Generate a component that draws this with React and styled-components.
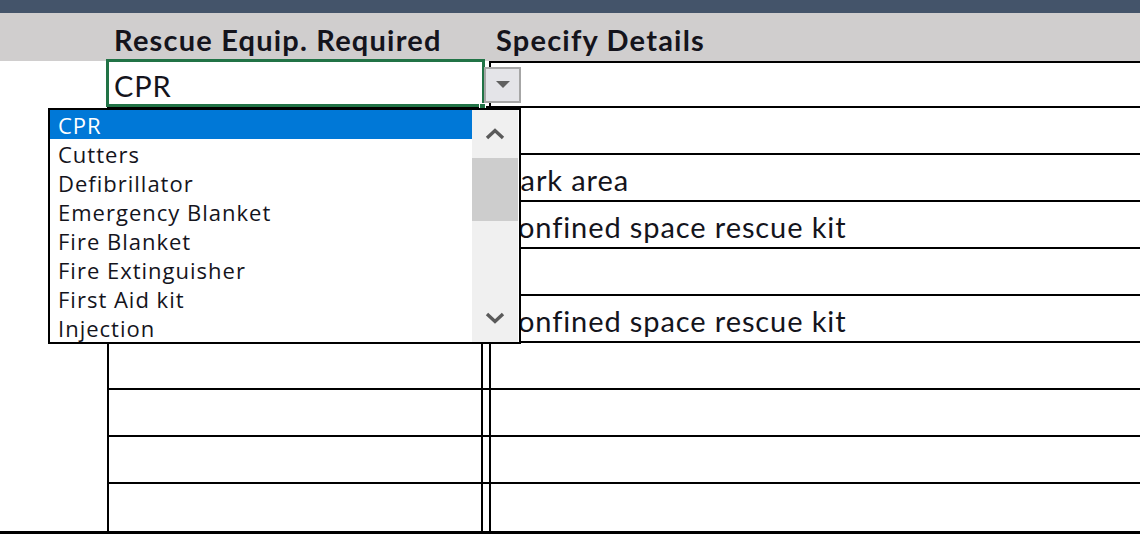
import React from 'react';
import styled, { createGlobalStyle } from 'styled-components';

const GlobalStyle = createGlobalStyle`
  html, body {
    margin: 0;
    padding: 0;
    background: #ffffff;
    overflow: hidden;
  }
  * {
    box-sizing: border-box;
  }
`;

const COLS = '107px 376px 6px 1fr';

const equipment = [
  'CPR',
  'Cutters',
  'Defibrillator',
  'Emergency Blanket',
  'Fire Blanket',
  'Fire Extinguisher',
  'First Aid kit',
  'Injection',
];

const details = [
  '',
  '',
  'Dark area',
  'Confined space rescue kit',
  '',
  'Confined space rescue kit',
  '',
  '',
  '',
  '',
];

const App = () => {
  return (
    <>
      <GlobalStyle />
      <Sheet>
        <TopBar />
        <HeaderRow>
          <span />
          <HeaderCell>Rescue Equip. Required</HeaderCell>
          <span />
          <HeaderCell>Specify Details</HeaderCell>
        </HeaderRow>
        <Body>
          {details.map((text, i) => (
            <Row key={i} $last={i === details.length - 1}>
              <BlankCell />
              <EquipCell $first={i === 0}>
                {i === 0 && (
                  <>
                    <ActiveFrame>
                      <CellText>CPR</CellText>
                      <FillHandle />
                    </ActiveFrame>
                    <DropButton>
                      <svg width="14" height="8" viewBox="0 0 14 8">
                        <path d="M0 0 L14 0 L7 7 Z" fill="#606060" />
                      </svg>
                    </DropButton>
                    <ListBox>
                      <Options>
                        {equipment.map((item, j) => (
                          <Option key={item} $selected={j === 0}>
                            {item}
                          </Option>
                        ))}
                      </Options>
                      <ScrollBar>
                        <ScrollArrow>
                          <svg width="20" height="12" viewBox="0 0 20 12">
                            <path d="M2 10 L10 2.5 L18 10" fill="none" stroke="#5a5a5a" strokeWidth="3.4" />
                          </svg>
                        </ScrollArrow>
                        <Track>
                          <Thumb />
                        </Track>
                        <ScrollArrow>
                          <svg width="20" height="12" viewBox="0 0 20 12">
                            <path d="M2 2 L10 9.5 L18 2" fill="none" stroke="#5a5a5a" strokeWidth="3.4" />
                          </svg>
                        </ScrollArrow>
                      </ScrollBar>
                    </ListBox>
                  </>
                )}
              </EquipCell>
              <span />
              <DetailCell $first={i === 0}>
                <CellText>{text}</CellText>
              </DetailCell>
            </Row>
          ))}
        </Body>
      </Sheet>
    </>
  );
};

export default App;

const Sheet = styled.div`
  width: 1140px;
  height: 539px;
  background: #ffffff;
  font-family: Lato, "Liberation Sans", sans-serif;
  color: #14141c;
`;

const TopBar = styled.div`
  height: 13px;
  background: #44546a;
`;

const HeaderRow = styled.div`
  display: grid;
  grid-template-columns: ${COLS};
  height: 48px;
  background: #d0cece;
`;

const HeaderCell = styled.div`
  display: flex;
  align-items: flex-end;
  padding: 0 0 4px 7px;
  font-size: 29px;
  font-weight: 700;
  letter-spacing: 1.2px;
  white-space: nowrap;
`;

const Body = styled.div`
  border-bottom: 3px solid #000;
`;

const Row = styled.div`
  display: grid;
  grid-template-columns: ${COLS};
  height: 47px;
  & > * {
    border-bottom: ${(p) => (p.$last ? 'none' : '2px solid #000')};
  }
`;

const BlankCell = styled.div`
  border-bottom: none !important;
`;

const EquipCell = styled.div`
  position: relative;
  border-left: 2px solid #000;
  border-right: 2px solid #000;
  ${(p) => p.$first && 'border-top: 2px solid #000;'}
`;

const DetailCell = styled.div`
  display: flex;
  align-items: flex-end;
  border-left: 2px solid #000;
  ${(p) => p.$first && 'border-top: 2px solid #000; height: 47px;'}
  padding: 0 0 6px 7px;
  overflow: hidden;
`;

const CellText = styled.span`
  font-size: 29px;
  line-height: 1;
  letter-spacing: 0.9px;
  white-space: nowrap;
`;

const ActiveFrame = styled.div`
  position: absolute;
  left: -3px;
  top: -4px;
  width: 379px;
  height: 48px;
  border: 3px solid #217346;
  background: #fff;
  display: flex;
  align-items: flex-end;
  padding: 0 0 4px 5px;
  z-index: 1;
`;

const FillHandle = styled.div`
  position: absolute;
  right: -4px;
  bottom: -5px;
  width: 7px;
  height: 6px;
  background: #217346;
  border: 1px solid #fff;
`;

const DropButton = styled.div`
  position: absolute;
  left: 375px;
  top: 4px;
  width: 37px;
  height: 36px;
  background: #e4e4e8;
  border: 2px solid #a6a6a6;
  display: flex;
  align-items: center;
  justify-content: center;
  z-index: 2;
`;

const ListBox = styled.div`
  position: absolute;
  left: -61px;
  top: 45px;
  width: 473px;
  height: 236px;
  border: 2px solid #000;
  background: #fff;
  display: flex;
  z-index: 3;
`;

const Options = styled.div`
  flex: 1;
  display: flex;
  flex-direction: column;
  font-family: "Open Sans", "Noto Sans", sans-serif;
`;

const Option = styled.div`
  height: 29px;
  display: flex;
  align-items: center;
  padding-left: 8px;
  font-size: 22px;
  letter-spacing: 1px;
  white-space: nowrap;
  color: ${(p) => (p.$selected ? '#ffffff' : '#14141c')};
  background: ${(p) => (p.$selected ? '#0078d7' : 'transparent')};
`;

const ScrollBar = styled.div`
  width: 46px;
  margin-right: 1px;
  background: #f0f0f0;
  display: flex;
  flex-direction: column;
`;

const ScrollArrow = styled.div`
  height: 48px;
  display: flex;
  align-items: center;
  justify-content: center;
`;

const Track = styled.div`
  flex: 1;
`;

const Thumb = styled.div`
  height: 63px;
  background: #cdcdcd;
`;
